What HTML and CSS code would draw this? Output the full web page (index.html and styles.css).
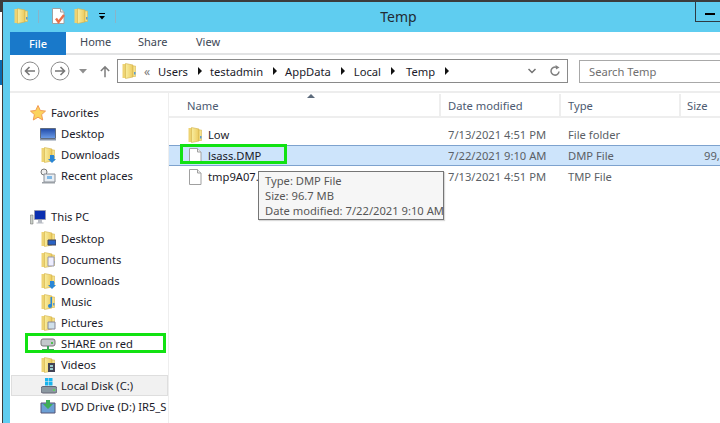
FILE: index.html
```html
<!DOCTYPE html>
<html lang="en">
<head>
<meta charset="utf-8">
<title>Temp</title>
<link rel="stylesheet" href="styles.css">
</head>
<body>
<svg class="defs" width="0" height="0">
  <defs>
    <linearGradient id="fg" x1="0" y1="0" x2="1" y2="0"><stop offset="0" stop-color="#f9eea0"/><stop offset="1" stop-color="#ecca5e"/></linearGradient>
    <linearGradient id="sc" x1="0" y1="0" x2="0" y2="1"><stop offset="0" stop-color="#1f49a8"/><stop offset="1" stop-color="#6d9ee8"/></linearGradient>
    <symbol id="folder" viewBox="0 0 16 16">
      <path d="M1.500 1h5v14h-5z" fill="#eed372"/>
      <path d="M4.500 .5l7.500 1.500v12l-7.500 1.500z" fill="url(#fg)" stroke="#d2b04a" stroke-width=".6"/>
      <path d="M12 3h2.500v10.500H12z" fill="#f6e28a" stroke="#d8b952" stroke-width=".6"/>
      <path d="M13 9h1.500v2.500H13z" fill="#5a9bd0"/>
    </symbol>
    <symbol id="doc" viewBox="0 0 16 16">
      <path d="M2.500 .5h8l3.500 3.500v11.500H2.500z" fill="#fff" stroke="#a0a0a0"/>
      <path d="M10.500 .5v3.500H14" fill="#eee" stroke="#a0a0a0"/>
    </symbol>
  </defs>
</svg>
<div class="desk-dark"></div>
<div class="desk-blue"></div>
<div class="window">
  <header class="titlebar">
    <div class="qat">
      <svg class="i16" viewBox="0 0 16 16"><use href="#folder"/></svg>
      <span class="qsep"></span>
      <svg class="i16" viewBox="0 0 16 16"><use href="#doc"/><path d="M6 10.500l2.500 3.500 5.500-7" fill="none" stroke="#e8704a" stroke-width="2.400"/></svg>
      <svg class="i16" viewBox="0 0 16 16"><use href="#folder"/></svg>
      <svg class="qdrop" viewBox="0 0 8 7"><path d="M1 0h6v1H1zM1 3h6L4 6.500z" fill="#000"/></svg>
      <span class="qsep"></span>
    </div>
    <div class="wintitle">Temp</div>
    <div class="minbtn"><span></span></div>
  </header>
  <nav class="tabs">
    <div class="filetab">File</div>
    <div class="tab tab-home">Home</div>
    <div class="tab tab-share">Share</div>
    <div class="tab">View</div>
  </nav>
  <div class="addressrow">
    <svg class="navbtn" viewBox="0 0 20 20"><circle cx="10" cy="10" r="9" fill="#fff" stroke="#8a8a8a"/><path d="M15 10H6M9.500 6L5.500 10l4 4" fill="none" stroke="#777" stroke-width="1.600"/></svg>
    <svg class="navbtn nav-fwd" viewBox="0 0 20 20"><circle cx="10" cy="10" r="9" fill="#fff" stroke="#8a8a8a"/><path d="M5 10h9M10.500 6l4 4-4 4" fill="none" stroke="#777" stroke-width="1.600"/></svg>
    <svg class="navdrop" viewBox="0 0 8 5"><path d="M0 0h8L4 4.500z" fill="#8f8f8f"/></svg>
    <svg class="navup" viewBox="0 0 12 14"><path d="M6 14V2M1 6.500L6 1.500l5 5" fill="none" stroke="#7d7d7d" stroke-width="1.800"/></svg>
    <div class="addrbox">
      <svg class="i16" viewBox="0 0 16 16"><use href="#folder"/></svg>
      <span class="chev">&laquo;</span>
      <span>Users</span><i class="crumb"></i>
      <span>testadmin</span><i class="crumb"></i>
      <span>AppData</span><i class="crumb crumb-m"></i>
      <span>Local</span><i class="crumb crumb-l"></i>
      <span>Temp</span><i class="crumb"></i>
      <svg class="addr-down" viewBox="0 0 8 6"><path d="M.5 1L4 4.500 7.500 1" fill="none" stroke="#707070" stroke-width="1.500"/></svg>
      <svg class="addr-refresh" viewBox="0 0 12 12"><path d="M10 6.500A4 4 0 1 1 7.500 2.400" fill="none" stroke="#808080" stroke-width="1.500"/><path d="M6.500 0l4 2.500-3.500 2z" fill="#808080"/></svg>
    </div>
    <div class="searchbox">Search Temp</div>
  </div>
  <main class="body">
    <aside class="sidebar">
      <div class="navrow head"><svg class="i16" viewBox="0 0 16 16"><path d="M8 .5l2.300 5 5.200.6-3.900 3.500 1.100 5.400L8 12.200 3.300 15l1.100-5.400L.5 6.100l5.200-.6z" fill="#fbd35e" stroke="#f29a55"/></svg>Favorites</div>
      <div class="navrow"><svg class="i16" viewBox="0 0 16 16"><path d="M.5 2.500h15v10H.5z" fill="url(#sc)" stroke="#5f6c80"/><path d="M0 13h16v1.500H0z" fill="#8794a8"/></svg>Desktop</div>
      <div class="navrow"><svg class="i16" viewBox="0 0 16 16"><use href="#folder"/><path d="M10 8h4v4h2l-4 4-4-4h2z" fill="#2a86d6"/></svg>Downloads</div>
      <div class="navrow"><svg class="i16" viewBox="0 0 16 16"><circle cx="4" cy="4" r="3" fill="#eee" stroke="#777"/><path d="M4 6h11v8H4z" fill="#e8edf2" stroke="#8a8f96"/><path d="M7 8h5v3H7z" fill="#7fb8e6"/><path d="M2 14h13v1.500H2z" fill="#9aa0a6"/></svg>Recent places</div>
      <div class="navrow head pc"><svg class="i16" viewBox="0 0 16 16"><path d="M.5 6h2.500v9H.5z" fill="#c9d0c8" stroke="#666" stroke-width=".5"/><path d="M4.500 1.500h11v9h-11z" fill="#0b2fb0" stroke="#99a" stroke-width=".8"/><path d="M8 11h4v2.500H8zM6.500 13.500h7v1h-7z" fill="#b8bcc4"/></svg>This PC</div>
      <div class="navrow"><svg class="i16" viewBox="0 0 16 16"><use href="#folder"/><path d="M8 9h8v5H8z" fill="#2a63c4" stroke="#445"/></svg>Desktop</div>
      <div class="navrow"><svg class="i16" viewBox="0 0 16 16"><use href="#folder"/><path d="M8 5h6v9H8z" fill="#eef" stroke="#99a"/></svg>Documents</div>
      <div class="navrow"><svg class="i16" viewBox="0 0 16 16"><use href="#folder"/><path d="M10 8h4v4h2l-4 4-4-4h2z" fill="#2a86d6"/></svg>Downloads</div>
      <div class="navrow"><svg class="i16" viewBox="0 0 16 16"><use href="#folder"/><path d="M12 3v9a2 2 0 1 1-1.500-2V3z" fill="#2a86d6"/></svg>Music</div>
      <div class="navrow"><svg class="i16" viewBox="0 0 16 16"><use href="#folder"/><path d="M8 7h7v7H8z" fill="#cfe0ea" stroke="#889"/></svg>Pictures</div>
      <div class="navrow"><svg class="i16" viewBox="0 0 16 16"><rect x="1" y="3" width="14" height="7" rx="2" fill="#c4c8cc" stroke="#777"/><path d="M11 6h2v2h-2z" fill="#4fc04f"/><path d="M7 10h2v3H7zM2 13h12v1.500H2z" fill="#3aa655"/></svg>SHARE on red</div>
      <div class="navrow"><svg class="i16" viewBox="0 0 16 16"><use href="#folder"/><path d="M8 6h7v9H8z" fill="#445"/><path d="M10 8h3v2h-3zM10 11h3v2h-3z" fill="#9cc"/></svg>Videos</div>
      <div class="navrow current"><svg class="i16" viewBox="0 0 16 16"><path d="M4 0h3.500v3.500H4zM8 0h3.500v3.500H8zM4 4h3.500v3.500H4zM8 4h3.500v3.500H8z" fill="#18b4ee"/><rect x="0" y="8.500" width="16" height="6.500" rx="2" fill="#8b98a0" stroke="#667"/><path d="M12 11h2v2h-2z" fill="#5fd05f"/></svg>Local Disk (C:)</div>
      <div class="navrow clip"><svg class="i16" viewBox="0 0 16 16"><path d="M1 4h14v10H1z" fill="#6c9fd4" stroke="#557"/><path d="M6 1h4v4h3l-5 5-5-5h3z" fill="#3fae55"/></svg>DVD Drive (D:) IR5_S</div>
    </aside>
    <section class="list">
      <svg class="sortup" viewBox="0 0 8 4"><path d="M0 4l4-4 4 4z" fill="#5d6b7c"/></svg>
      <div class="row headrow">
        <div class="c-name hcell">Name</div>
        <div class="c-date hcell">Date modified</div>
        <div class="c-type hcell">Type</div>
        <div class="c-size hcell">Size</div>
      </div>
      <div class="row file">
        <div class="c-name"><svg class="i16" viewBox="0 0 16 16"><use href="#folder"/></svg><span class="fname">Low</span></div>
        <div class="c-date">7/13/2021 4:51 PM</div>
        <div class="c-type">File folder</div>
        <div class="c-size"></div>
      </div>
      <div class="row file selected">
        <div class="c-name"><svg class="i16" viewBox="0 0 16 16"><use href="#doc"/></svg><span class="fname">lsass.DMP</span></div>
        <div class="c-date">7/22/2021 9:10 AM</div>
        <div class="c-type">DMP File</div>
        <div class="c-size num">99,0</div>
      </div>
      <div class="row file">
        <div class="c-name"><svg class="i16" viewBox="0 0 16 16"><use href="#doc"/></svg><span class="fname">tmp9A07.tmp</span></div>
        <div class="c-date">7/13/2021 4:51 PM</div>
        <div class="c-type">TMP File</div>
        <div class="c-size"></div>
      </div>
    </section>
  </main>
</div>
<div class="tooltip">Type: DMP File<br>Size: 96.7 MB<br>Date modified: 7/22/2021 9:10 AM</div>
<div class="mark mark-file"></div>
<div class="mark mark-share"></div>
</body>
</html>
```
FILE: styles.css
```css
* { box-sizing: border-box; }
html, body { margin: 0; height: 100%; }
body {
  width: 720px; height: 423px; overflow: hidden; position: relative;
  background: #fff;
  font-family: "Noto Sans", "Open Sans", sans-serif;
  font-size: 11.2px; color: #1a1a2a;
}
.defs { position: absolute; }
.desk-blue { position: absolute; left: 0; top: 60px; width: 2px; height: 25px; background: #0a6ab0; }
.desk-dark { position: absolute; left: 0; top: 0; width: 2px; height: 12px; background: #3c3c3c; }
.i16 { width: 16px; height: 16px; flex: none; display: block; }
.window {
  margin-left: 2px; height: 423px;
  background: #5fcdf0; border-left: 1px solid #3c3c3c; border-top: 2px solid #3c3c3c;
  display: flex; flex-direction: column;
  padding: 0 0 0 7px;
}
.titlebar { height: 30px; margin-left: -7px; flex: none; display: flex; align-items: flex-start; position: relative; }
.qat { display: flex; align-items: center; padding: 6px 0 0 10px; }
.qat .i16:nth-child(3) { margin-left: 11px; }
.qat .i16:nth-child(4) { margin-left: 7px; }
.qsep { width: 1px; height: 13px; background: #8ab4c8; margin-left: 9px; }
.qdrop { width: 8px; height: 7px; margin-left: 9px; }
.qdrop + .qsep { margin-left: 9px; }
.wintitle { position: absolute; left: 0; right: 0; top: 5px; text-align: center; font-size: 14px; color: #222a33; padding-left: 74px; }
.minbtn { position: absolute; left: 692px; top: 0; width: 25px; height: 20px; border-left: 1px solid #2e3a42; border-bottom: 1px solid #2e3a42; display: flex; align-items: center; justify-content: center; }
.minbtn span { width: 10px; height: 2px; background: #000; display: block; margin: 4px 0 0 3px; }
.tabs { height: 23px; flex: none; background: #fff; display: flex; border-bottom: 2px solid #e2e3e4; align-items: stretch; color: #3c4654; font-size: 11px; }
.filetab { width: 56px; height: 23px; background: #1979ca; color: #fff; display: flex; align-items: center; justify-content: center; font-weight: 500; }
.tab { display: flex; align-items: center; padding: 0 0 2px 14px; width: 58px; }
.tab-home { width: 58px; padding-left: 14px; }
.tab-share { width: 58px; padding-left: 14px; }
.addressrow { height: 38px; flex: none; background: #fff; display: flex; align-items: center; padding: 0 0 4px 10px; border-bottom: 2px solid #ededed; position: relative; }
.navbtn { width: 20px; height: 20px; flex: none; }
.nav-fwd { margin-left: 10px; }
.navdrop { width: 8px; height: 5px; margin-left: 9px; flex: none; }
.navup { width: 10px; height: 13px; margin-left: 13px; flex: none; }
.addrbox { width: 451px; height: 24px; margin-left: 7px; border: 1px solid #8a8a8a; display: flex; align-items: center; padding-left: 3px; flex: none; color: #1a1a2a; }
.chev { margin: 0 8px 0 7px; color: #777; font-size: 12px; }
.crumb { width: 0; height: 0; border-left: 4px solid #111; border-top: 4px solid transparent; border-bottom: 4px solid transparent; margin: 0 8px 0 10px; }
.crumb-m { margin-right: 9px; }
.crumb-l { margin-right: 11px; }
.addr-down { width: 8px; height: 6px; margin-left: auto; }
.addr-refresh { width: 12px; height: 12px; margin: 0 6px 0 13px; }
.searchbox { width: 141px; height: 23px; margin-left: 11px; border: 1px solid #a8a8a8; border-right: 0; display: flex; align-items: center; padding-left: 9px; color: #707070; flex: none; }
.body { flex: 1; background: #fff; display: flex; min-height: 0; }
.sidebar { width: 159px; flex: none; border-right: 1px solid #eeeeee; padding-top: 9px; overflow: hidden; }
.navrow { height: 21px; display: flex; align-items: center; padding-left: 30px; gap: 5px; white-space: nowrap; }
.navrow.head { padding-left: 20px; gap: 5px; }
.navrow.pc { margin-top: 20px; margin-bottom: 1px; }
.navrow.current { background: #f1f1f1; border: 1px solid #dedede; margin-left: 1px; padding-left: 29px; gap: 4px; }
.list { flex: 1; position: relative; overflow: hidden; }
.sortup { position: absolute; left: 138px; top: 1px; width: 8px; height: 4px; }
.row { display: flex; align-items: center; height: 21px; color: #5b5f66; }
.headrow { height: 25px; margin-bottom: 6px; border-bottom: 2px solid #eeeeee; color: #4c5a70; padding-top: 1px; }
.hcell { align-self: stretch; display: flex; align-items: center; border-right: 2px solid #eeeeee; }
.c-name { width: 272px; padding-left: 18px; display: flex; align-items: center; flex: none; color: #1a1a2a; }
.headrow .c-name { color: #4c5a70; }
.c-date { width: 120px; padding-left: 7px; flex: none; }
.c-type { width: 120px; padding-left: 7px; flex: none; }
.c-size { width: 40px; padding-left: 6px; flex: none; border-right: 0; }
.fname { margin-left: 5px; white-space: nowrap; }
.selected { background: #cde4fb; border-top: 1px solid #7da2ce; border-bottom: 1px solid #7da2ce; }
.num { padding-left: 23px; white-space: nowrap; }
.tooltip {
  position: absolute; left: 258px; top: 171px; width: 186px; height: 49px;
  background: #f6f6f6; border: 1px solid #767676; box-shadow: 1px 1px 1px rgba(0,0,0,.15);
  color: #575757; padding: 1px 0 0 6px; line-height: 15px; white-space: nowrap;
}
.mark { position: absolute; border: 3px solid #12e212; }
.mark-file { left: 180px; top: 144px; width: 107px; height: 20px; }
.mark-share { left: 25px; top: 333px; width: 141px; height: 20px; }
```
